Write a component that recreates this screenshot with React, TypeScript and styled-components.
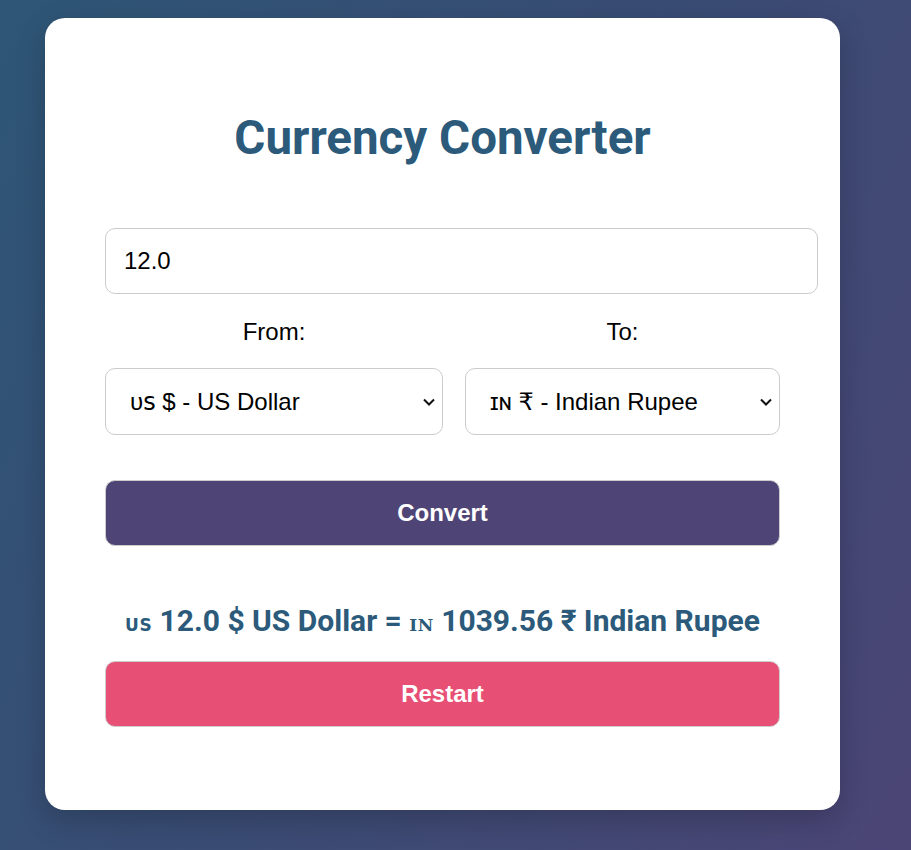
import React from "react";
import styled, { createGlobalStyle } from "styled-components";

const GlobalStyle = createGlobalStyle`
  html, body {
    margin: 0;
    padding: 0;
  }
  body {
    min-height: 850px;
    background: linear-gradient(120deg, #2e5676 0%, #3a4c74 50%, #4b4576 100%);
    font-family: "Liberation Sans", Arial, sans-serif;
  }
`;

const chevron =
  "data:image/svg+xml;utf8," +
  encodeURIComponent(
    '<svg xmlns="http://www.w3.org/2000/svg" width="12" height="8" viewBox="0 0 12 8"><path d="M1 1.5 L6 6.5 L11 1.5" fill="none" stroke="#111" stroke-width="2"/></svg>'
  );

const Page = styled.div`
  padding: 18px 45px 40px;
`;

const Card = styled.div`
  width: 795px;
  box-sizing: border-box;
  background: #ffffff;
  border-radius: 20px;
  padding: 93px 60px 83px;
  box-shadow: 0 10px 30px rgba(0, 0, 0, 0.2);
`;

const Title = styled.h1`
  margin: 0;
  text-align: center;
  font-family: Roboto, "Liberation Sans", sans-serif;
  font-weight: 700;
  font-size: 47.5px;
  line-height: 55px;
  color: #2c5a7b;
`;

const AmountInput = styled.input`
  display: block;
  box-sizing: content-box;
  width: 100%;
  height: 64px;
  margin: 62px 0 0;
  padding: 0 18px;
  border: 1px solid #cccccc;
  border-radius: 10px;
  font-family: "Liberation Sans", Arial, sans-serif;
  font-size: 24px;
  color: #000;
  background: #fff;
  outline: none;
`;

const SelectRow = styled.div`
  display: grid;
  grid-template-columns: 338px 315px;
  column-gap: 22px;
  margin-top: 24px;
`;

const Field = styled.div`
  display: flex;
  flex-direction: column;
  align-items: stretch;
  gap: 22px;
`;

const Label = styled.label`
  text-align: center;
  font-size: 24px;
  line-height: 28px;
  color: #000;
`;

const CurrencySelect = styled.select`
  appearance: none;
  -webkit-appearance: none;
  height: 67px;
  width: 100%;
  padding: 0 30px 0 24px;
  border: 1px solid #cccccc;
  border-radius: 10px;
  background-color: #fff;
  background-image: url("${chevron}");
  background-repeat: no-repeat;
  background-position: right 7px center;
  background-size: 12px 8px;
  font-family: "Liberation Sans", "DejaVu Sans", Arial, sans-serif;
  font-size: 24px;
  color: #000;
  outline: none;
`;

const ActionButton = styled.button<{ $bg: string; $mt: number }>`
  display: block;
  width: 100%;
  height: 66px;
  margin-top: ${(p) => p.$mt}px;
  border: 1px solid #cccccc;
  border-radius: 10px;
  background: ${(p) => p.$bg};
  color: #fff;
  font-family: "Liberation Sans", Arial, sans-serif;
  font-weight: 700;
  font-size: 24px;
  cursor: pointer;
`;

const Result = styled.p`
  margin: 57px 0 22px;
  height: 36px;
  text-align: center;
  font-family: Roboto, "Liberation Sans", sans-serif;
  font-weight: 700;
  font-size: 30px;
  line-height: 36px;
  color: #2c5a7b;
`;

const Flag = styled.span<{ $serif?: boolean }>`
  font-family: ${(p) => (p.$serif ? '"DejaVu Serif", serif' : '"DejaVu Sans", sans-serif')};
  font-weight: 700;
  font-size: 17px;
  line-height: 1;
  letter-spacing: 0.5px;
`;

export default function App() {
  return (
    <>
      <GlobalStyle />
      <Page>
        <Card>
          <Title>Currency Converter</Title>
          <AmountInput type="text" defaultValue="12.0" />
          <SelectRow>
            <Field>
              <Label>From:</Label>
              <CurrencySelect defaultValue="USD">
                <option value="USD">ᴜꜱ $ - US Dollar</option>
              </CurrencySelect>
            </Field>
            <Field>
              <Label>To:</Label>
              <CurrencySelect defaultValue="INR">
                <option value="INR">ɪɴ ₹ - Indian Rupee</option>
              </CurrencySelect>
            </Field>
          </SelectRow>
          <ActionButton $bg="#4e4576" $mt={45}>Convert</ActionButton>
          <Result>
            <Flag>US</Flag> 12.0 $ US Dollar = <Flag $serif>IN</Flag> 1039.56 ₹ Indian Rupee
          </Result>
          <ActionButton $bg="#e84f74" $mt={0}>Restart</ActionButton>
        </Card>
      </Page>
    </>
  );
}
